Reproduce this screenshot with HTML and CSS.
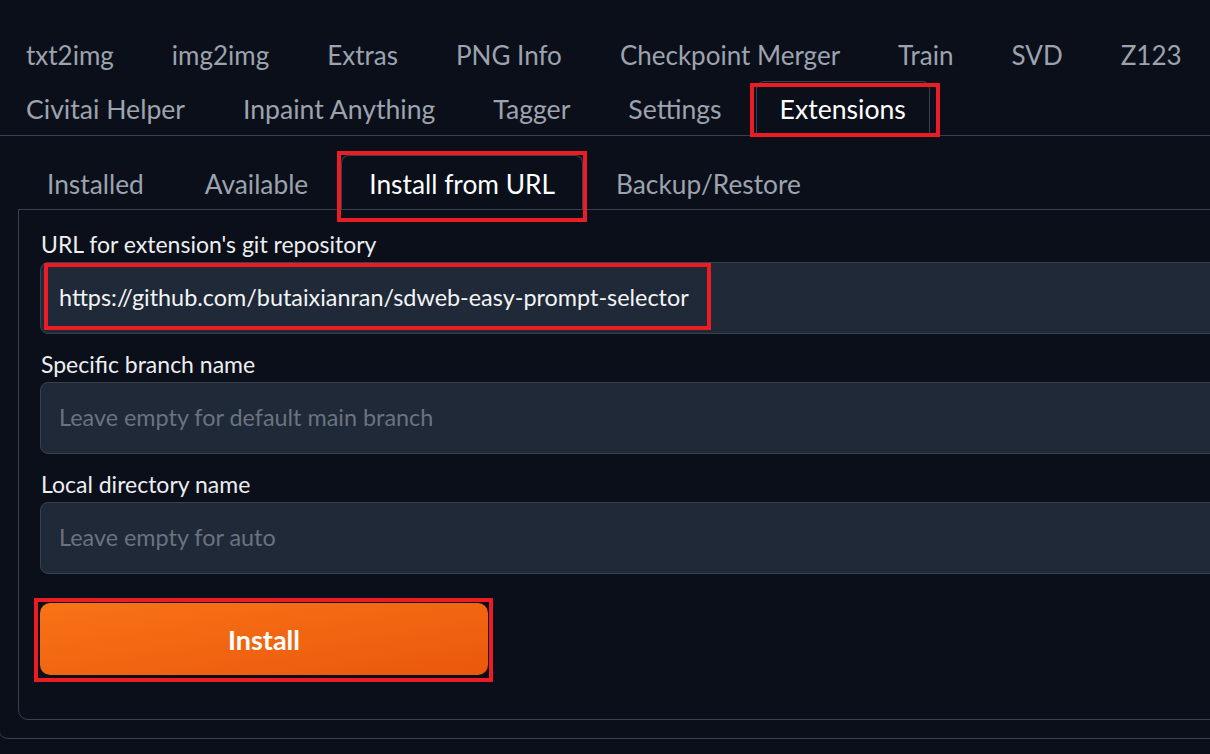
FILE: index.html
```html
<!DOCTYPE html>
<html lang="en">
<head>
<meta charset="utf-8">
<title>Extensions</title>
<link rel="stylesheet" href="styles.css">
</head>
<body>
<div class="app">
  <nav class="main-tabs">
    <div class="tab-row tab-row-first">
      <button class="tab">txt2img</button>
      <button class="tab">img2img</button>
      <button class="tab">Extras</button>
      <button class="tab">PNG Info</button>
      <button class="tab">Checkpoint Merger</button>
      <button class="tab">Train</button>
      <button class="tab">SVD</button>
      <button class="tab">Z123</button>
    </div>
    <div class="tab-row tab-row-second">
      <button class="tab">Civitai Helper</button>
      <button class="tab">Inpaint Anything</button>
      <button class="tab">Tagger</button>
      <button class="tab">Settings</button>
      <button class="tab selected hl-ext">Extensions</button>
    </div>
  </nav>
  <section class="ext-panel">
    <nav class="sub-tabs">
      <button class="subtab">Installed</button>
      <button class="subtab">Available</button>
      <button class="subtab selected hl-sub">Install from URL</button>
      <button class="subtab">Backup/Restore</button>
    </nav>
    <div class="sub-panel">
      <div class="field">
        <label class="label">URL for extension's git repository</label>
        <div class="input-wrap">
          <input class="input" type="text" value="https://github.com/butaixianran/sdweb-easy-prompt-selector">
          <span class="hl-url"></span>
        </div>
      </div>
      <div class="field">
        <label class="label">Specific branch name</label>
        <div class="input-wrap">
          <input class="input" type="text" placeholder="Leave empty for default main branch">
        </div>
      </div>
      <div class="field">
        <label class="label">Local directory name</label>
        <div class="input-wrap">
          <input class="input" type="text" placeholder="Leave empty for auto">
        </div>
      </div>
      <button class="install hl-btn">Install</button>
    </div>
  </section>
</div>
</body>
</html>
```

FILE: styles.css
```css
html, body {
  margin: 0;
  padding: 0;
  background: #0b0f19;
  overflow: hidden;
}
body {
  font-family: "Lato", "Noto Sans", sans-serif;
  color: #e5e7eb;
}
button, input {
  font-family: inherit;
}
.app {
  padding-top: 27px;
  width: 1300px;
}
.main-tabs {
  display: flex;
  flex-direction: column;
  padding-left: 2px;
}
.tab-row {
  display: flex;
  gap: 10px;
  height: 54px;
}
.tab-row-second .tab {
  font-size: 26.6px;
}
.tab {
  position: relative;
  background: transparent;
  border: 1px solid transparent;
  border-bottom: none;
  border-radius: 8px 8px 0 0;
  padding: 0 23px;
  height: 54px;
  font-size: 26px;
  color: #9ca3af;
  white-space: nowrap;
}
.tab.selected {
  color: #ffffff;
  border-color: #374151;
}
.hl-ext::after {
  content: "";
  position: absolute;
  left: -7px;
  right: -11px;
  top: 1px;
  bottom: -2px;
  border: 4px solid #ec1c24;
}
.ext-panel {
  margin-left: -2px;
  border: 1px solid #374151;
  border-radius: 0 0 10px 10px;
  padding: 19px 0 18px 19px;
}
.sub-tabs {
  display: flex;
  gap: 5px;
  padding-left: 1px;
}
.subtab {
  position: relative;
  height: 54px;
  padding: 2px 27px 0;
  background: transparent;
  border: 1px solid transparent;
  border-bottom: none;
  border-radius: 8px 8px 0 0;
  font-size: 26.3px;
  color: #9ca3af;
  white-space: nowrap;
}
.subtab.selected {
  color: #ffffff;
  border-color: #374151;
}
.hl-sub::after {
  content: "";
  position: absolute;
  left: -5px;
  right: -5px;
  top: -5px;
  bottom: -13px;
  border: 4px solid #ec1c24;
}
.sub-panel {
  border: 1px solid #374151;
  border-radius: 0 0 0 10px;
  padding: 21px 21px 44px 21px;
  display: flex;
  flex-direction: column;
  gap: 17px;
}
.field {
  display: flex;
  flex-direction: column;
  gap: 5px;
}
.label {
  font-size: 23px;
  line-height: 26px;
  color: #eceef2;
  padding-left: 1px;
}
.input-wrap {
  position: relative;
}
.input {
  box-sizing: border-box;
  width: 100%;
  height: 72px;
  background: #1f2937;
  border: 1px solid #374151;
  border-radius: 8px;
  padding: 0 18px 3px;
  font-size: 23.4px;
  color: #f3f4f6;
  outline: none;
}
.input::placeholder {
  color: #6b7280;
}
.hl-url {
  position: absolute;
  left: 4px;
  top: 1px;
  width: 667px;
  height: 67px;
  box-sizing: border-box;
  border: 4px solid #ec1c24;
}
.install {
  position: relative;
  align-self: flex-start;
  margin-top: 12px;
  width: 448px;
  height: 72px;
  border: none;
  border-radius: 10px;
  background: linear-gradient(to bottom right, #f97316, #ea580c);
  color: #ffffff;
  font-size: 27px;
  font-weight: 700;
}
.hl-btn::after {
  content: "";
  position: absolute;
  left: -6px;
  right: -5px;
  top: -5px;
  bottom: -7px;
  border: 4px solid #ec1c24;
}
```
